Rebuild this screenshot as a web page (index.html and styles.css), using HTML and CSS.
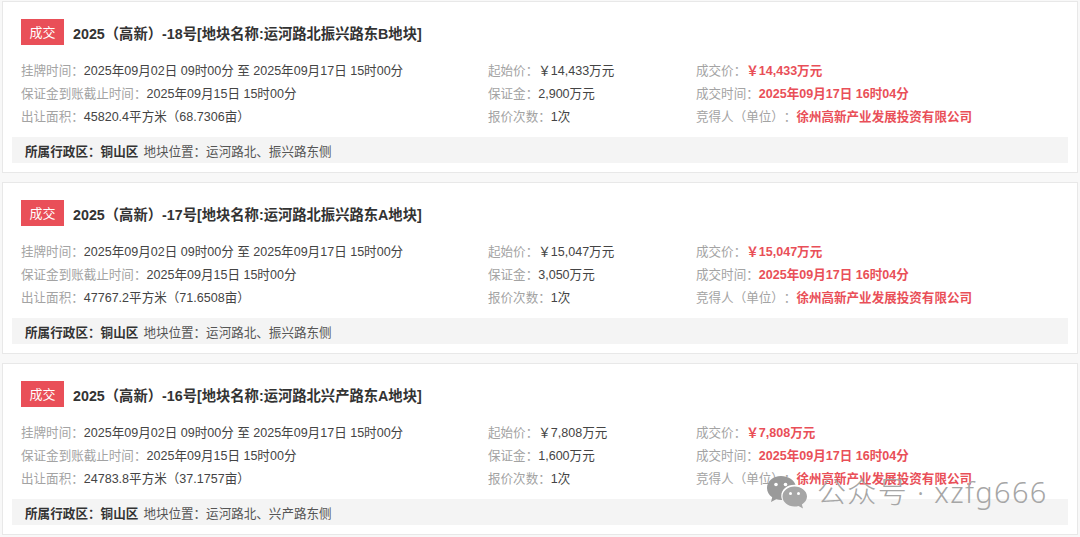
FILE: index.html
```html
<!DOCTYPE html>
<html lang="zh-CN">
<head>
<meta charset="utf-8">
<title>成交公告</title>
<link rel="stylesheet" href="styles.css">
</head>
<body>
<main class="list">
  <article class="card">
    <header class="head"><span class="badge">成交</span><h2 class="title">2025（高新）-18号[地块名称:运河路北振兴路东B地块]</h2></header>
    <div class="info">
      <div class="col col-a">
        <p><span class="k">挂牌时间：</span>2025年09月02日 09时00分 至 2025年09月17日 15时00分</p>
        <p><span class="k">保证金到账截止时间：</span>2025年09月15日 15时00分</p>
        <p><span class="k">出让面积：</span>45820.4平方米（68.7306亩）</p>
      </div>
      <div class="col col-b">
        <p><span class="k">起始价：</span>￥14,433万元</p>
        <p><span class="k">保证金：</span>2,900万元</p>
        <p><span class="k">报价次数：</span>1次</p>
      </div>
      <div class="col col-c">
        <p><span class="k">成交价：</span><b class="hot">￥14,433万元</b></p>
        <p><span class="k">成交时间：</span><b class="hot">2025年09月17日 16时04分</b></p>
        <p><span class="k">竞得人（单位）：</span><b class="hot">徐州高新产业发展投资有限公司</b></p>
      </div>
    </div>
    <div class="foot"><b class="district">所属行政区：铜山区</b><span>地块位置：运河路北、振兴路东侧</span></div>
  </article>
  <article class="card">
    <header class="head"><span class="badge">成交</span><h2 class="title">2025（高新）-17号[地块名称:运河路北振兴路东A地块]</h2></header>
    <div class="info">
      <div class="col col-a">
        <p><span class="k">挂牌时间：</span>2025年09月02日 09时00分 至 2025年09月17日 15时00分</p>
        <p><span class="k">保证金到账截止时间：</span>2025年09月15日 15时00分</p>
        <p><span class="k">出让面积：</span>47767.2平方米（71.6508亩）</p>
      </div>
      <div class="col col-b">
        <p><span class="k">起始价：</span>￥15,047万元</p>
        <p><span class="k">保证金：</span>3,050万元</p>
        <p><span class="k">报价次数：</span>1次</p>
      </div>
      <div class="col col-c">
        <p><span class="k">成交价：</span><b class="hot">￥15,047万元</b></p>
        <p><span class="k">成交时间：</span><b class="hot">2025年09月17日 16时04分</b></p>
        <p><span class="k">竞得人（单位）：</span><b class="hot">徐州高新产业发展投资有限公司</b></p>
      </div>
    </div>
    <div class="foot"><b class="district">所属行政区：铜山区</b><span>地块位置：运河路北、振兴路东侧</span></div>
  </article>
  <article class="card">
    <header class="head"><span class="badge">成交</span><h2 class="title">2025（高新）-16号[地块名称:运河路北兴产路东A地块]</h2></header>
    <div class="info">
      <div class="col col-a">
        <p><span class="k">挂牌时间：</span>2025年09月02日 09时00分 至 2025年09月17日 15时00分</p>
        <p><span class="k">保证金到账截止时间：</span>2025年09月15日 15时00分</p>
        <p><span class="k">出让面积：</span>24783.8平方米（37.1757亩）</p>
      </div>
      <div class="col col-b">
        <p><span class="k">起始价：</span>￥7,808万元</p>
        <p><span class="k">保证金：</span>1,600万元</p>
        <p><span class="k">报价次数：</span>1次</p>
      </div>
      <div class="col col-c">
        <p><span class="k">成交价：</span><b class="hot">￥7,808万元</b></p>
        <p><span class="k">成交时间：</span><b class="hot">2025年09月17日 16时04分</b></p>
        <p><span class="k">竞得人（单位）：</span><b class="hot">徐州高新产业发展投资有限公司</b></p>
      </div>
    </div>
    <div class="foot"><b class="district">所属行政区：铜山区</b><span>地块位置：运河路北、兴产路东侧</span></div>
  </article>
</main>
<div class="mark">
  <svg class="mark-icon" width="42" height="36" viewBox="0 0 42 36" aria-hidden="true">
    <path d="M15 1C7 1 1 6.500 1 13c0 3.800 2 7 5.200 9.300L5 27l5.200-2.700c1.600.5 3.200.7 4.800.7h1.200C15.500 23.500 15.300 22 15.300 20.800 15.300 14.500 21 9.700 28.500 9.700h1C27.800 4.700 22 1 15 1z" fill="#9a9a9a"/>
    <path d="M28.500 11.500C21.800 11.500 16.500 16 16.500 21.500S21.800 31.500 28.500 31.500c1.400 0 2.800-.2 4-.6L37 33.500l-1.100-4C39 27.500 41 24.700 41 21.500 41 16 35.300 11.500 28.500 11.500z" fill="#a6a6a6"/>
    <circle cx="10" cy="9.500" r="1.800" fill="#fff"/><circle cx="19.500" cy="9.500" r="1.800" fill="#fff"/>
    <circle cx="24.500" cy="18.500" r="1.500" fill="#fff"/><circle cx="32.500" cy="18.500" r="1.500" fill="#fff"/>
  </svg>
  <span class="mark-text">公众号 · xzfg666</span>
</div>
</body>
</html>
```
FILE: styles.css
```css
* { box-sizing: border-box; }
html, body { margin: 0; height: 537px; overflow: hidden; background: #f8f8f8; }
body { font-family: "Liberation Sans", "Noto Sans CJK SC", sans-serif; font-size: 12.55px; color: #444; position: relative; text-spacing-trim: space-all; }
.list { display: flex; flex-direction: column; gap: 9px; padding: 1px 2px 0; }
.card { background: #fff; border: 1px solid #e8e8e8; height: 172px; padding: 17px 9px 0; flex: none; }
.head { display: flex; align-items: center; padding-left: 9px; height: 26px; gap: 9px; }
.badge { width: 43px; height: 26px; line-height: 28px; text-align: center; background: #e94f58; color: #fff; font-size: 13px; }
.title { margin: 0; padding-top: 3px; font-size: 14.3px; font-weight: 700; color: #333; line-height: 26px; }
.info { display: flex; padding: 15px 0 0 9px; height: 92px; }
.col p { margin: 0; line-height: 23px; white-space: nowrap; }
.col-a { width: 467px; }
.col-b { width: 208px; }
.k { color: #a3a3a3; }
.hot { color: #e94f58; font-weight: 700; }
.foot { background: #f4f4f4; height: 26px; line-height: 30px; padding-left: 13px; display: flex; gap: 5px; color: #555; }
.district { color: #333; letter-spacing: .05px; }
.mark { position: absolute; left: 766px; top: 474px; display: flex; align-items: center; gap: 9px; }
.mark-text { font-family: "Noto Sans", "Noto Sans CJK SC", sans-serif; font-size: 29px; font-weight: 300; color: #a6a6a6; line-height: 40px; white-space: nowrap; letter-spacing: 1.35px; margin-top: -2px; }
```
